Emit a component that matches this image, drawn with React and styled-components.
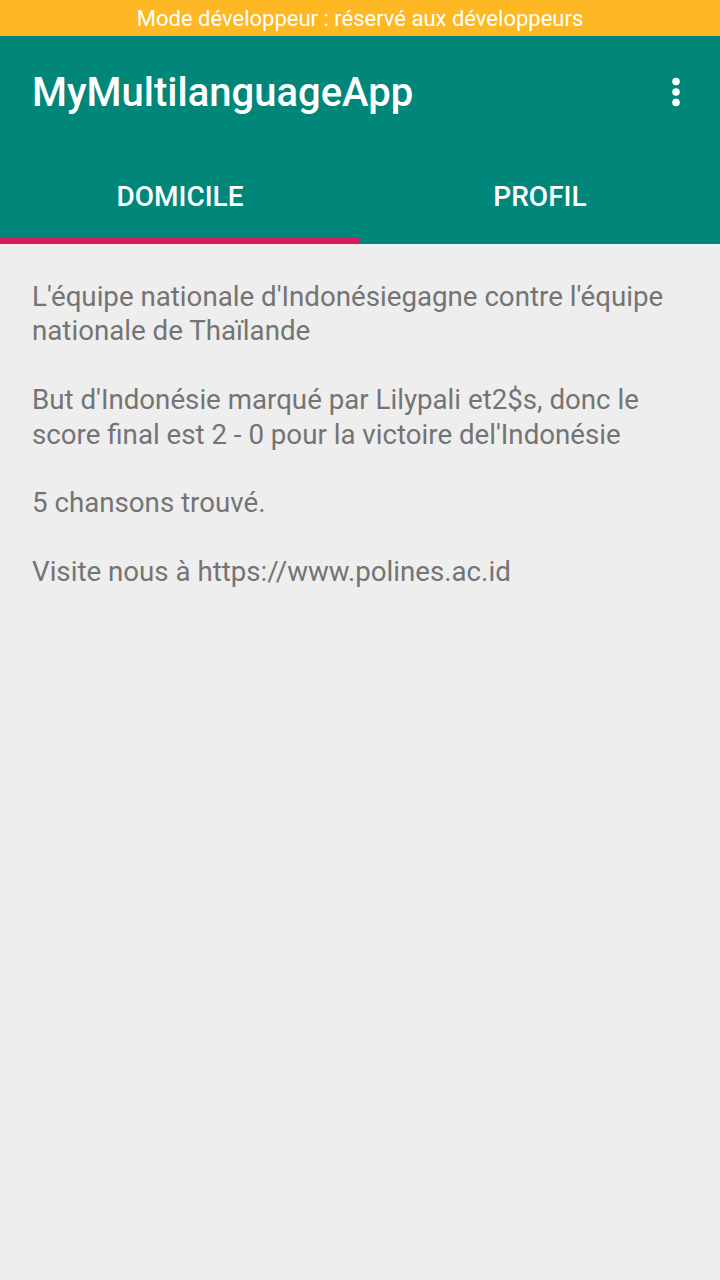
import React from "react";
import styled, { createGlobalStyle } from "styled-components";

const GlobalStyle = createGlobalStyle`
  html, body {
    margin: 0;
    padding: 0;
    background: #eeeeee;
    font-family: Roboto, "Noto Sans", sans-serif;
  }
`;

const Screen = styled.div`
  width: 720px;
  min-height: 1280px;
  background: #eeeeee;
  display: flex;
  flex-direction: column;
`;

const DevBanner = styled.div`
  height: 36px;
  background: #fdb824;
  color: #ffffff;
  font-size: 22px;
  display: flex;
  align-items: center;
  justify-content: center;
`;

const AppBar = styled.header`
  background: #00877a;
  color: #ffffff;
`;

const Toolbar = styled.div`
  height: 112px;
  display: flex;
  align-items: center;
  justify-content: space-between;
  padding: 0 38px 0 32px;
`;

const Title = styled.h1`
  margin: 0;
  font-size: 40px;
  font-weight: 500;
  letter-spacing: 0;
`;

const MenuButton = styled.div`
  display: flex;
  align-items: center;
`;

const Tabs = styled.nav`
  display: flex;
  height: 96px;
`;

const Tab = styled.div`
  flex: 1;
  display: flex;
  align-items: center;
  justify-content: center;
  font-size: 28px;
  font-weight: 500;
  color: #ffffff;
  border-bottom: 6px solid ${(p) => (p.active ? "#d81b60" : "transparent")};
  padding-top: 6px;
`;

const Content = styled.main`
  padding: 36px 32px;
  color: #747474;
  font-size: 27.7px;
  line-height: 34.4px;
  white-space: pre-line;
`;

const text = `L'équipe nationale d'Indonésiegagne contre l'équipe nationale de Thaïlande

But d'Indonésie marqué par Lilypali et2$s, donc le score final est 2 - 0 pour la victoire del'Indonésie

5 chansons trouvé.

Visite nous à https://www.polines.ac.id`;

const MoreIcon = () => (
  <svg width="12" height="30" viewBox="0 0 12 30">
    <circle cx="6" cy="4.5" r="3.8" fill="#fff" />
    <circle cx="6" cy="15" r="3.8" fill="#fff" />
    <circle cx="6" cy="25.5" r="3.8" fill="#fff" />
  </svg>
);

export default function App() {
  return (
    <Screen>
      <GlobalStyle />
      <DevBanner>Mode développeur : réservé aux développeurs</DevBanner>
      <AppBar>
        <Toolbar>
          <Title>MyMultilanguageApp</Title>
          <MenuButton>
            <MoreIcon />
          </MenuButton>
        </Toolbar>
        <Tabs>
          <Tab active>DOMICILE</Tab>
          <Tab>PROFIL</Tab>
        </Tabs>
      </AppBar>
      <Content>{text}</Content>
    </Screen>
  );
}
